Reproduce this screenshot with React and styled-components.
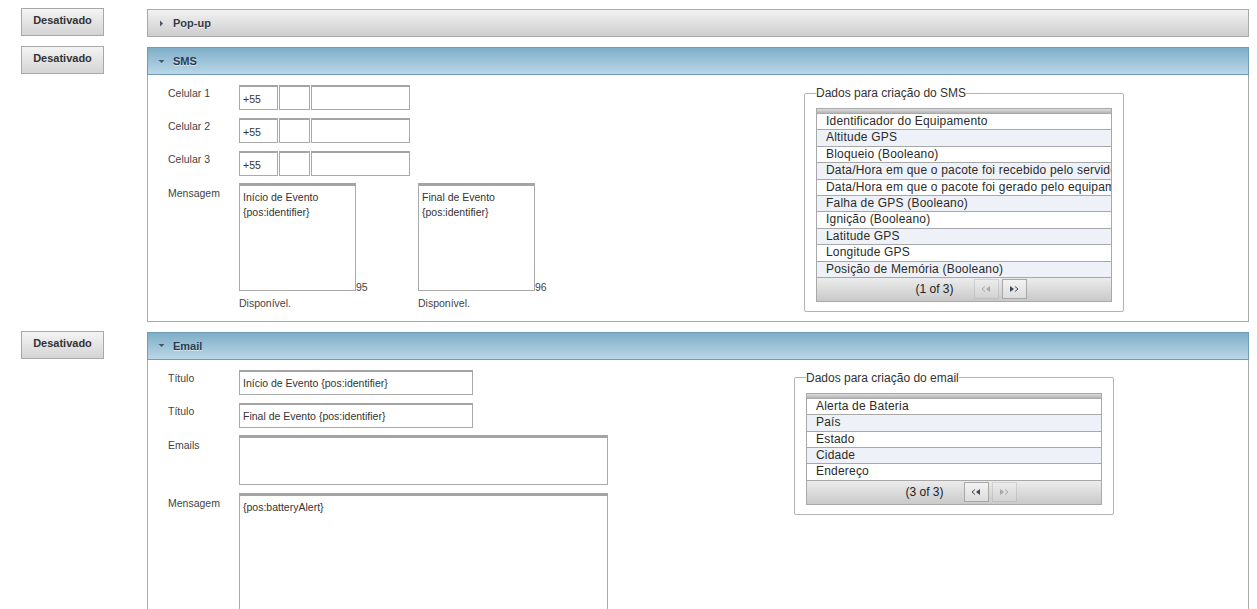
import styled, { createGlobalStyle } from "styled-components";

const GlobalStyle = createGlobalStyle`
  html, body {
    margin: 0;
    background: #fff;
    font-family: "Liberation Sans", Arial, sans-serif;
    color: #333;
  }
`;

const smsFields = [
  "Identificador do Equipamento",
  "Altitude GPS",
  "Bloqueio (Booleano)",
  "Data/Hora em que o pacote foi recebido pelo servidor",
  "Data/Hora em que o pacote foi gerado pelo equipamento",
  "Falha de GPS (Booleano)",
  "Ignição (Booleano)",
  "Latitude GPS",
  "Longitude GPS",
  "Posição de Memória (Booleano)",
];

const emailFields = ["Alerta de Bateria", "País", "Estado", "Cidade", "Endereço"];

const Caret = ({ open }) => (
  <svg width="7" height="7" viewBox="0 0 7 7">
    {open ? (
      <polygon points="0.5,2 6.5,2 3.5,5" fill="#4d5560" />
    ) : (
      <polygon points="2,0.5 5,3.5 2,6.5" fill="#4d5560" />
    )}
  </svg>
);

const SeekIcon = ({ dir }) => (
  <svg width="10" height="6" viewBox="0 0 10 6">
    {dir === "prev" ? (
      <>
        <polyline points="4,0.5 1,3 4,5.5" fill="none" stroke="#3d4a5a" strokeWidth="1" />
        <polygon points="9,0 5,3 9,6" fill="#3d4a5a" />
      </>
    ) : (
      <>
        <polygon points="1,0 5,3 1,6" fill="#3d4a5a" />
        <polyline points="6,0.5 9,3 6,5.5" fill="none" stroke="#3d4a5a" strokeWidth="1" />
      </>
    )}
  </svg>
);

const FieldTable = ({ rows, page, total }) => (
  <Table>
    <TableHead />
    {rows.map((r, i) => (
      <TableRow key={r} $odd={i % 2 === 1}>
        {r}
      </TableRow>
    ))}
    <Paginator>
      <PageInfo>
        ({page} of {total})
      </PageInfo>
      <PageButtons>
        <PageButton $disabled={page === 1}>
          <SeekIcon dir="prev" />
        </PageButton>
        <PageButton $disabled={page === total}>
          <SeekIcon dir="next" />
        </PageButton>
      </PageButtons>
    </Paginator>
  </Table>
);

const App = () => {
  return (
    <Page>
      <GlobalStyle />

      <Section>
        <ToggleButton>Desativado</ToggleButton>
        <Panel>
          <PanelHeader>
            <Caret />
            Pop-up
          </PanelHeader>
        </Panel>
      </Section>

      <Section>
        <ToggleButton>Desativado</ToggleButton>
        <Panel>
          <PanelHeader $open>
            <Caret open />
            SMS
          </PanelHeader>
          <PanelBody $bottom={9}>
            <FormArea $width={636}>
              {[1, 2, 3].map((n) => (
                <FormRow key={n}>
                  <Label>Celular {n}</Label>
                  <PhoneGroup>
                    <TextInput $w={39} defaultValue="+55" />
                    <TextInput $w={31} />
                    <TextInput $w={99} />
                  </PhoneGroup>
                </FormRow>
              ))}
              <FormRow $top={7}>
                <Label $pad={3}>Mensagem</Label>
                <MessageGroups>
                  <MessageGroup>
                    <CounterLine>
                      <TextArea
                        $w={117}
                        $h={108}
                        defaultValue={"Início de Evento\n{pos:identifier}"}
                      />
                      <Counter>95</Counter>
                    </CounterLine>
                    <Hint>Disponível.</Hint>
                  </MessageGroup>
                  <MessageGroup>
                    <CounterLine>
                      <TextArea
                        $w={117}
                        $h={108}
                        defaultValue={"Final de Evento\n{pos:identifier}"}
                      />
                      <Counter>96</Counter>
                    </CounterLine>
                    <Hint>Disponível.</Hint>
                  </MessageGroup>
                </MessageGroups>
              </FormRow>
            </FormArea>
            <FieldSet>
              <Legend>Dados para criação do SMS</Legend>
              <FieldTable rows={smsFields} page={1} total={3} />
            </FieldSet>
          </PanelBody>
        </Panel>
      </Section>

      <Section>
        <ToggleButton>Desativado</ToggleButton>
        <Panel>
          <PanelHeader $open>
            <Caret open />
            Email
          </PanelHeader>
          <PanelBody>
            <FormArea $width={626}>
              <FormRow>
                <Label>Título</Label>
                <TextInput $w={234} defaultValue="Início de Evento {pos:identifier}" />
              </FormRow>
              <FormRow>
                <Label>Título</Label>
                <TextInput $w={234} defaultValue="Final de Evento {pos:identifier}" />
              </FormRow>
              <FormRow $top={7}>
                <Label $pad={3}>Emails</Label>
                <TextArea $w={369} $h={50} />
              </FormRow>
              <FormRow $top={8}>
                <Label $pad={3}>Mensagem</Label>
                <TextArea $w={369} $h={160} defaultValue="{pos:batteryAlert}" />
              </FormRow>
            </FormArea>
            <FieldSet>
              <Legend>Dados para criação do email</Legend>
              <FieldTable rows={emailFields} page={3} total={3} />
            </FieldSet>
          </PanelBody>
        </Panel>
      </Section>
    </Page>
  );
};

const Page = styled.div`
  height: 100vh;
  overflow: hidden;
  box-sizing: border-box;
  padding: 8px 8px 0 21px;
  display: flex;
  flex-direction: column;
  gap: 9px;
`;

const Section = styled.div`
  display: flex;
  align-items: flex-start;
`;

const ToggleButton = styled.button`
  flex: none;
  width: 83px;
  height: 28px;
  margin: 0 43px 0 0;
  padding: 4px 0 0;
  box-sizing: border-box;
  border: 1px solid #a8a8a8;
  border-radius: 0;
  background: linear-gradient(#f4f4f4, #d4d4d4);
  font-family: "Liberation Sans", Arial, sans-serif;
  font-size: 11px;
  font-weight: bold;
  line-height: 14px;
  color: #333;
  display: flex;
  align-items: flex-start;
  justify-content: center;
`;

const Panel = styled.div`
  flex: 1;
  margin-top: 1px;
  min-width: 0;
`;

const PanelHeader = styled.div`
  height: 28px;
  box-sizing: border-box;
  display: flex;
  align-items: center;
  gap: 8px;
  padding-left: 10px;
  font-size: 11px;
  font-weight: bold;
  color: ${(p) => (p.$open ? "#2b3a52" : "#333b48")};
  text-shadow: 0 1px 0 rgba(255, 255, 255, 0.6);
  border: 1px solid ${(p) => (p.$open ? "#6f9cb8" : "#a8a8a8")};
  background: ${(p) =>
    p.$open
      ? "linear-gradient(#7eaec8, #bad7e7)"
      : "linear-gradient(#f2f2f2, #cdcdcd)"};
`;

const PanelBody = styled.div`
  display: flex;
  align-items: flex-start;
  border: 1px solid #a8a8a8;
  border-top: none;
  padding: 10px 0 ${(p) => p.$bottom ?? 10}px 20px;
`;

const FormArea = styled.div`
  width: ${(p) => p.$width}px;
  flex: none;
  display: flex;
  flex-direction: column;
  gap: 8px;
`;

const FormRow = styled.div`
  display: flex;
  align-items: flex-start;
  margin-top: ${(p) => (p.$top ? p.$top - 8 : 0)}px;
`;

const Label = styled.div`
  width: 71px;
  flex: none;
  padding-top: ${(p) => p.$pad ?? 1}px;
  font-size: 10.5px;
  line-height: 14px;
  color: #444;
`;

const PhoneGroup = styled.div`
  display: flex;
  gap: 1px;
`;

const TextInput = styled.input`
  width: ${(p) => p.$w}px;
  height: 25px;
  box-sizing: border-box;
  margin: 0;
  padding: 1px 3px 0;
  border: 1px solid #a9a9a9;
  border-top: 2px solid #a4a4a4;
  border-radius: 0;
  font-family: "Liberation Sans", Arial, sans-serif;
  font-size: 10.5px;
  color: #333;
  background: #fff;
  outline: none;
`;

const MessageGroups = styled.div`
  display: flex;
`;

const MessageGroup = styled.div`
  width: 179px;
  display: flex;
  flex-direction: column;
  gap: 5px;
`;

const CounterLine = styled.div`
  display: flex;
  align-items: flex-end;
`;

const TextArea = styled.textarea`
  width: ${(p) => p.$w}px;
  height: ${(p) => p.$h}px;
  box-sizing: border-box;
  margin: 0;
  padding: 4px 3px;
  border: 1px solid #a9a9a9;
  border-top: 3px solid #a4a4a4;
  border-radius: 0;
  resize: none;
  overflow: hidden;
  font-family: "Liberation Sans", Arial, sans-serif;
  font-size: 10.5px;
  line-height: 15px;
  color: #333;
  background: #fff;
  outline: none;
  display: block;
`;

const Counter = styled.span`
  font-size: 10.5px;
  line-height: 10px;
  color: #444;
  margin-bottom: -1px;
`;

const Hint = styled.div`
  font-size: 10.5px;
  line-height: 14px;
  color: #444;
`;

const FieldSet = styled.fieldset`
  width: 320px;
  flex: none;
  box-sizing: border-box;
  margin: 1px 0 0;
  padding: 8px 11px 9px 11px;
  border: 1px solid #b4b4b4;
  border-radius: 2px;
  min-width: 0;
`;

const Legend = styled.legend`
  padding: 0;
  font-size: 12px;
  color: #333;
`;

const Table = styled.div`
  border: 1px solid #a8a8a8;
  font-size: 12px;
  color: #2a2a2a;
`;

const TableHead = styled.div`
  height: 4px;
  background: linear-gradient(#dcdcdc, #b5b5b5);
  border-bottom: 1px solid #a8a8a8;
`;

const TableRow = styled.div`
  height: 15.4px;
  line-height: 15.4px;
  padding-left: 9px;
  letter-spacing: 0.2px;
  white-space: nowrap;
  overflow: hidden;
  border-bottom: 1px solid #a8a8a8;
  background: ${(p) => (p.$odd ? "#eef2f8" : "#fff")};
`;

const Paginator = styled.div`
  height: 23px;
  display: flex;
  align-items: center;
  justify-content: center;
  gap: 20px;
  padding-left: 14px;
  background: linear-gradient(#ececec, #c9c9c9);
  font-size: 12px;
  color: #222;
`;

const PageInfo = styled.span``;

const PageButtons = styled.div`
  display: flex;
  gap: 3px;
`;

const PageButton = styled.div`
  width: 25px;
  height: 20px;
  box-sizing: border-box;
  display: flex;
  align-items: center;
  justify-content: center;
  border: 1px solid #a8a8a8;
  background: linear-gradient(#f3f3f3, #dcdcdc);
  opacity: ${(p) => (p.$disabled ? 0.35 : 1)};
`;

export default App;
